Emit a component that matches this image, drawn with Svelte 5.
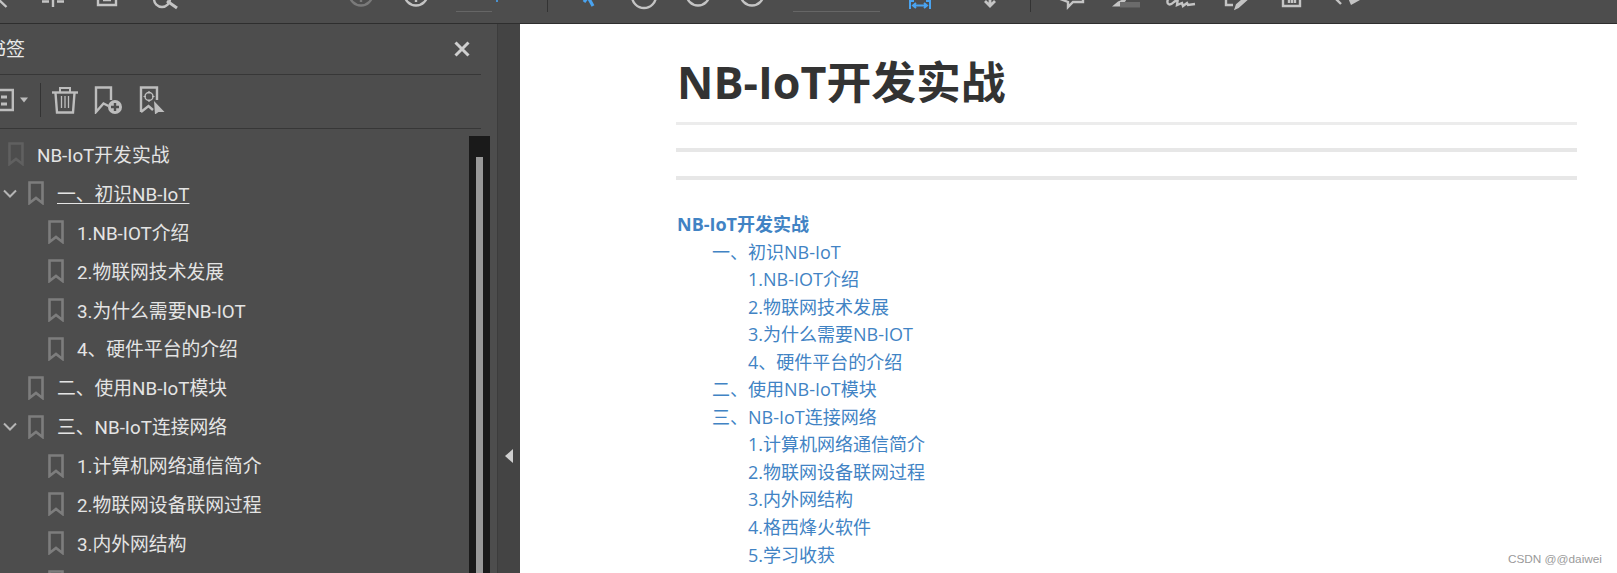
<script>
    const bookmarks = [
        { level: 0, title: 'NB-IoT开发实战', dim: true },
        { level: 1, title: '一、初识NB-IoT', open: true, active: true },
        { level: 2, title: '1.NB-IOT介绍' },
        { level: 2, title: '2.物联网技术发展' },
        { level: 2, title: '3.为什么需要NB-IOT' },
        { level: 2, title: '4、硬件平台的介绍' },
        { level: 1, title: '二、使用NB-IoT模块' },
        { level: 1, title: '三、NB-IoT连接网络', open: true },
        { level: 2, title: '1.计算机网络通信简介' },
        { level: 2, title: '2.物联网设备联网过程' },
        { level: 2, title: '3.内外网结构' },
        { level: 2, title: '4.格西烽火软件' }
    ];

    const toc = [
        { level: 0, title: 'NB-IoT开发实战' },
        { level: 1, title: '一、初识NB-IoT' },
        { level: 2, title: '1.NB-IOT介绍' },
        { level: 2, title: '2.物联网技术发展' },
        { level: 2, title: '3.为什么需要NB-IOT' },
        { level: 2, title: '4、硬件平台的介绍' },
        { level: 1, title: '二、使用NB-IoT模块' },
        { level: 1, title: '三、NB-IoT连接网络' },
        { level: 2, title: '1.计算机网络通信简介' },
        { level: 2, title: '2.物联网设备联网过程' },
        { level: 2, title: '3.内外网结构' },
        { level: 2, title: '4.格西烽火软件' },
        { level: 2, title: '5.学习收获' }
    ];
</script>

<div class="app">
    <div class="topbar">
        <!-- the screenshot cuts the toolbar off at the top, so icons hang above y=0 -->
        <svg width="1617" height="23" viewBox="0 0 1617 23" fill="none" stroke="#c4c4c4" stroke-width="2.4">
            <path d="M-2 -1L6.500 7" />
            <path d="M53 -2V7M42 1.500h7M57 1.500h7" />
            <path d="M98 -3V5H116V-3M103 0H111" />
            <path d="M154 -1a8 8 0 0 0 16 0" />
            <path d="M167 1L177 8" stroke-width="3" />
            <circle cx="361" cy="-6" r="11.500" stroke="#7a7a7a" />
            <path d="M361 -2V2" stroke="#7a7a7a" />
            <circle cx="416" cy="-6" r="11.500" />
            <path d="M416 -2V2" />
            <path d="M456 11.500H492" stroke="#666" stroke-width="1" />
            <path d="M497 -1V2" stroke="#4aa3ef" stroke-width="1.600" />
            <path d="M547.500 0V12M1030.500 0V12" stroke="#333" stroke-width="1" />
            <path d="M584 2L588 -3L593 6" stroke="#4aa3ef" stroke-width="3.200" />
            <circle cx="644" cy="-4" r="12" />
            <circle cx="698" cy="-6" r="11.500" />
            <circle cx="752" cy="-6" r="11.500" />
            <path d="M793 11.500H880" stroke="#666" stroke-width="1" />
            <path d="M910 9V-2M930 9V-2M913 5.500H927M916 3l-3 2.500 3 2.500M924 3l3 2.500-3 2.500M910 1H914M926 1H930" stroke="#4aa3ef" stroke-width="2" />
            <path d="M990 -2V6M985 1l5 5 5-5" stroke-width="2.800" />
            <path d="M1060 -1l8 3v5l5-5h10V-1" />
            <path d="M1112 6.500l6-5 7-3 1 2-5 6z" fill="#c4c4c4" stroke="none" />
            <rect x="1120" y="2" width="20" height="5.500" fill="#6b6b6b" stroke="none" />
            <path d="M1168 -1c-2 6 2 7 6 3l3-2M1178 -2l-1 7 5-2 1 3 4-3 1 2 7-1" />
            <path d="M1226 -2v7h7M1247 -1l-9 8-2 1 1-3 8-7" />
            <path d="M1283 -3v9h17v-9H1283M1289 0v3M1292 0v3M1295 0v3" />
            <path d="M1335 -2l6 6" />
            <path d="M1348 -2l12 2-9 5z" fill="#c4c4c4" stroke="none" />
        </svg>
    </div>

    <div class="main">
        <aside class="sidebar">
            <header class="panel-head">
                <span class="panel-title">书签</span>
                <svg class="close" width="16" height="16" viewBox="0 0 16 16" stroke="#cfcfcf" stroke-width="3">
                    <path d="M1.500 1.500L14.500 14.500M14.500 1.500L1.500 14.500" />
                </svg>
            </header>

            <div class="panel-tools">
                <svg class="tool-list" width="30" height="24" viewBox="0 0 30 24" fill="none" stroke="#bdbdbd" stroke-width="2.400">
                    <path d="M-6 2H12.800V22H-6" />
                    <path d="M1 9H7M1 16H7" stroke-width="2.800" />
                    <path d="M20 9.500H28L24 14.500Z" fill="#bdbdbd" stroke="none" />
                </svg>
                <span class="tool-sep"></span>
                <svg class="tool" width="26" height="28" viewBox="0 0 26 28" fill="none" stroke="#bdbdbd" stroke-width="2.400">
                    <path d="M0 6.500H26" />
                    <path d="M8 6V2H18V6" stroke-width="2" />
                    <path d="M3.500 7L5 26.500H21L22.500 7" />
                    <path d="M9.500 10V22M13 10V22M16.500 10V22" stroke-width="1.300" />
                </svg>
                <svg class="tool add" width="28" height="28" viewBox="0 0 28 28" fill="none" stroke="#bdbdbd" stroke-width="2.400">
                    <path d="M14.500 20L9.500 17.500L2 26V1.500H17V14" />
                    <circle cx="21" cy="21" r="7" fill="#bdbdbd" stroke="none" />
                    <path d="M21 17V25M17 21H25" stroke="#4d4d4d" stroke-width="2.400" />
                </svg>
                <svg class="tool target" width="26" height="28" viewBox="0 0 26 28" fill="none" stroke="#bdbdbd" stroke-width="2.400">
                    <path d="M2 26V1.500H18V14M2 26L9.500 20L14 24" />
                    <circle cx="10" cy="10.500" r="4" stroke-width="1.500" />
                    <path d="M10 5V7.500M10 13.500V16M4.500 10.500H7M13 10.500H15.500" stroke-width="1.200" />
                    <path d="M15 15L25.500 26H19.500L16 28.500Z" fill="#bdbdbd" stroke="none" />
                </svg>
            </div>

            <div class="tree-wrap">
                <ul class="tree">
                    {#each bookmarks as item}
                        <li class="row lv{item.level}">
                            {#if item.open}
                                <svg class="chevron" width="14" height="9" viewBox="0 0 14 9" fill="none" stroke="#b5b5b5" stroke-width="2">
                                    <path d="M1 1.500L7 7.500L13 1.500" />
                                </svg>
                            {/if}
                            <svg class="mark" width="16" height="24" viewBox="0 0 16 24" fill="none" stroke={item.dim ? '#606060' : '#7d7d7d'} stroke-width="2.600">
                                <path d="M1.500 1.500H14.500V22L8 17L1.500 22Z" />
                            </svg>
                            <span class="row-text" class:active={item.active}>{item.title}</span>
                        </li>
                    {/each}
                </ul>
                <div class="scrollbar"><div class="thumb"></div></div>
            </div>
        </aside>

        <div class="collapse-strip">
            <span class="collapse-arrow"></span>
        </div>

        <main class="page">
            <h1>NB-IoT开发实战</h1>
            <div class="rule first"></div>
            <div class="rule second"></div>
            <div class="rule third"></div>
            <ul class="toc">
                {#each toc as entry}
                    <li class="toc-lv{entry.level}">{entry.title}</li>
                {/each}
            </ul>
            <div class="watermark">CSDN @@daiwei</div>
        </main>
    </div>
</div>

<style>
    :global(body) {
        margin: 0;
        overflow: hidden;
    }

    .app {
        width: 1617px;
        height: 573px;
        overflow: hidden;
        display: flex;
        flex-direction: column;
        font-family: "Open Sans", "Noto Sans CJK SC", sans-serif;
        background: #4d4d4d;
    }

    .topbar {
        height: 23px;
        flex: none;
        background: #4d4d4d;
        border-bottom: 1px solid #2e2e2e;
    }

    .topbar svg {
        display: block;
    }

    .main {
        flex: 1;
        display: flex;
        min-height: 0;
    }

    .sidebar {
        width: 497px;
        flex: none;
        background: #4d4d4d;
        display: flex;
        flex-direction: column;
        box-sizing: border-box;
        padding-right: 16px;
        min-height: 0;
    }

    .panel-head {
        height: 50px;
        flex: none;
        display: flex;
        align-items: center;
        justify-content: space-between;
        border-bottom: 1px solid #373737;
    }

    .panel-title {
        margin-left: -13px;
        margin-bottom: 2px;
        font-size: 19px;
        color: #e8e8e8;
    }

    .close {
        margin-right: 11px;
    }

    .panel-tools {
        height: 54px;
        flex: none;
        box-sizing: border-box;
        padding-bottom: 3px;
        display: flex;
        align-items: center;
        border-bottom: 1px solid #373737;
    }

    .tool-list {
        margin-right: 10px;
    }

    .tool-sep {
        width: 1px;
        height: 34px;
        background: #333;
        margin-right: 11px;
    }

    .tool {
        margin-right: 16px;
    }

    .tool.target {
        margin-left: 1px;
    }

    .tree-wrap {
        flex: 1;
        min-height: 0;
        display: flex;
        margin-right: -9px;
        padding-top: 6px;
    }

    .tree {
        flex: 1;
        list-style: none;
        margin: 0;
        padding: 0;
    }

    .row {
        position: relative;
        height: 38.900px;
        display: flex;
        align-items: center;
        font-family: Roboto, "Noto Sans CJK SC", sans-serif;
        font-size: 18.800px;
        color: #e4e4e4;
        white-space: nowrap;
    }

    .row.lv0 {
        padding-left: 8px;
    }

    .row.lv1 {
        padding-left: 28px;
    }

    .row.lv2 {
        padding-left: 48px;
    }

    .mark {
        flex: none;
        margin-right: 13px;
    }

    .row-text {
        margin-bottom: 2px;
    }

    .chevron {
        position: absolute;
        left: 3px;
        top: 15px;
    }

    .active {
        text-decoration: underline;
        text-underline-offset: 2px;
        text-decoration-thickness: 1px;
    }

    .scrollbar {
        width: 21px;
        flex: none;
        background: #1a1a1a;
        margin-top: 1px;
        padding-top: 21px;
        display: flex;
        justify-content: center;
    }

    .thumb {
        width: 7px;
        background: #999;
    }

    .collapse-strip {
        width: 23px;
        flex: none;
        background: #444;
        border-left: 1px solid #3c3c3c;
        box-sizing: border-box;
        display: flex;
        align-items: center;
        justify-content: center;
        padding-top: 314px;
    }

    .collapse-arrow {
        width: 0;
        height: 0;
        border-top: 7px solid transparent;
        border-bottom: 7px solid transparent;
        border-right: 8px solid #d0d0d0;
    }

    .page {
        position: relative;
        flex: 1;
        background: #fff;
        padding-left: 156px;
        padding-right: 40px;
    }

    h1 {
        margin: 0 0 0 1px;
        padding-top: 28px;
        height: 70px;
        font-size: 44.800px;
        line-height: 60px;
        font-weight: 700;
        color: #333;
    }

    .rule.first {
        height: 3px;
        background: #ececec;
    }

    .rule.second {
        height: 4px;
        margin-top: 23px;
        background: #e7e7e7;
    }

    .rule.third {
        height: 4px;
        margin-top: 24px;
        background: #e7e7e7;
    }

    .toc {
        list-style: none;
        margin: 31px 0 0;
        padding: 0;
        font-size: 18px;
        line-height: 27.550px;
        color: #4183c4;
        white-space: nowrap;
    }

    .toc-lv0 {
        font-weight: 700;
        padding-left: 1px;
    }

    .toc-lv1 {
        padding-left: 36px;
    }

    .toc-lv2 {
        padding-left: 72px;
    }

    .watermark {
        position: absolute;
        right: 15px;
        bottom: 7px;
        font-family: "Liberation Sans", sans-serif;
        font-size: 11.800px;
        color: #9a9a9a;
    }
</style>
